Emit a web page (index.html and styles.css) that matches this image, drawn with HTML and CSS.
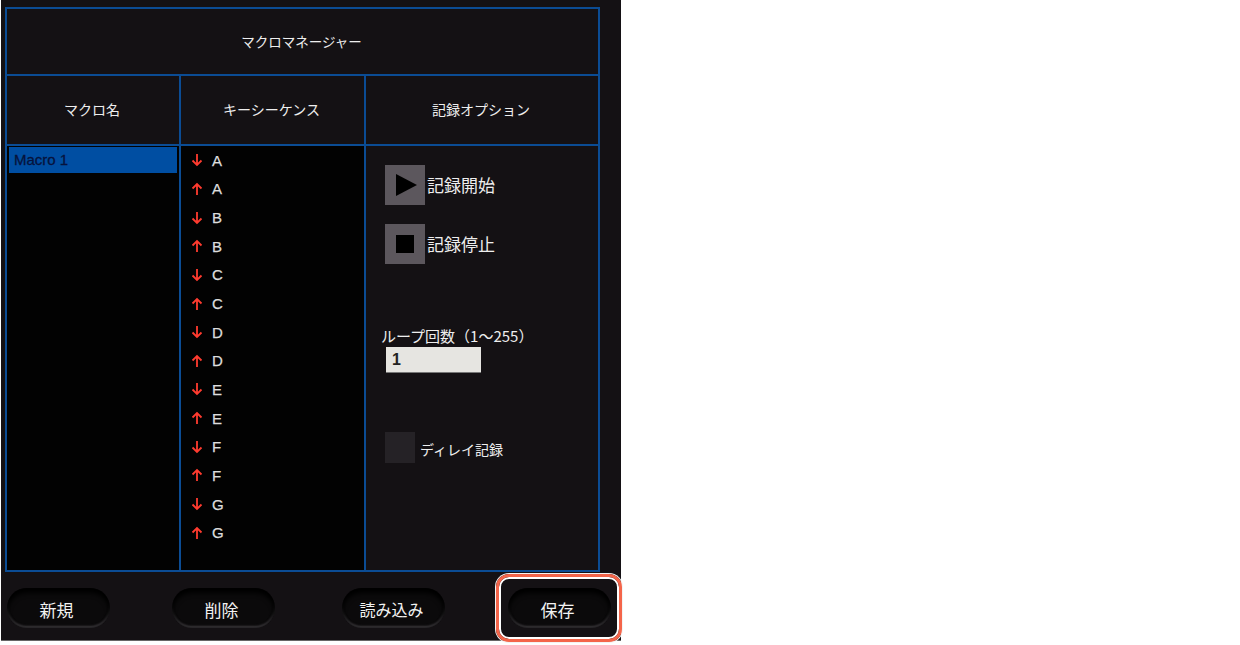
FILE: index.html
```html
<!DOCTYPE html>
<html lang="ja">
<head>
<meta charset="utf-8">
<title>マクロマネージャー</title>
<link rel="stylesheet" href="styles.css">
</head>
<body>
<main class="panel">
  <section class="table">
    <div class="title">マクロマネージャー</div>
    <div class="head">マクロ名</div>
    <div class="head">キーシーケンス</div>
    <div class="head">記録オプション</div>
    <div class="macros"><div class="macro">Macro 1</div></div>
    <ul class="keys">
      <li><svg class="arrow" viewBox="0 0 12 14"><path d="M6 1V12M1.5 7.5L6 12L10.5 7.5"/></svg>A</li>
      <li><svg class="arrow" viewBox="0 0 12 14"><path d="M6 13V2M1.5 6.5L6 2L10.5 6.5"/></svg>A</li>
      <li><svg class="arrow" viewBox="0 0 12 14"><path d="M6 1V12M1.5 7.5L6 12L10.5 7.5"/></svg>B</li>
      <li><svg class="arrow" viewBox="0 0 12 14"><path d="M6 13V2M1.5 6.5L6 2L10.5 6.5"/></svg>B</li>
      <li><svg class="arrow" viewBox="0 0 12 14"><path d="M6 1V12M1.5 7.5L6 12L10.5 7.5"/></svg>C</li>
      <li><svg class="arrow" viewBox="0 0 12 14"><path d="M6 13V2M1.5 6.5L6 2L10.5 6.5"/></svg>C</li>
      <li><svg class="arrow" viewBox="0 0 12 14"><path d="M6 1V12M1.5 7.5L6 12L10.5 7.5"/></svg>D</li>
      <li><svg class="arrow" viewBox="0 0 12 14"><path d="M6 13V2M1.5 6.5L6 2L10.5 6.5"/></svg>D</li>
      <li><svg class="arrow" viewBox="0 0 12 14"><path d="M6 1V12M1.5 7.5L6 12L10.5 7.5"/></svg>E</li>
      <li><svg class="arrow" viewBox="0 0 12 14"><path d="M6 13V2M1.5 6.5L6 2L10.5 6.5"/></svg>E</li>
      <li><svg class="arrow" viewBox="0 0 12 14"><path d="M6 1V12M1.5 7.5L6 12L10.5 7.5"/></svg>F</li>
      <li><svg class="arrow" viewBox="0 0 12 14"><path d="M6 13V2M1.5 6.5L6 2L10.5 6.5"/></svg>F</li>
      <li><svg class="arrow" viewBox="0 0 12 14"><path d="M6 1V12M1.5 7.5L6 12L10.5 7.5"/></svg>G</li>
      <li><svg class="arrow" viewBox="0 0 12 14"><path d="M6 13V2M1.5 6.5L6 2L10.5 6.5"/></svg>G</li>
    </ul>
    <div class="options">
      <div class="rec">
        <span class="icon-btn"><svg class="icon" viewBox="0 0 40 40"><path d="M11 9V31L32 20Z"/></svg></span>
        <span class="rec-text">記録開始</span>
      </div>
      <div class="rec rec-stop">
        <span class="icon-btn"><svg class="icon" viewBox="0 0 40 40"><rect x="11" y="11" width="18" height="18"/></svg></span>
        <span class="rec-text">記録停止</span>
      </div>
      <div class="loop">
        <div class="loop-label">ループ回数（1～255）</div>
        <div class="loop-input">1</div>
      </div>
      <div class="delay">
        <span class="check"></span>
        <span class="delay-text">ディレイ記録</span>
      </div>
    </div>
  </section>
  <footer class="actions">
    <div class="btn">新規</div>
    <div class="btn">削除</div>
    <div class="btn btn-load">読み込み</div>
    <div class="btn btn-save">保存</div>
  </footer>
  <div class="highlight"></div>
</main>
</body>
</html>
```
FILE: styles.css
```css
* { box-sizing: border-box; }
html, body { margin: 0; background: #fff; }
body {
  width: 1240px;
  height: 645px;
  overflow: hidden;
  font-family: "Noto Sans CJK JP", "Liberation Sans", sans-serif;
  color: #eee;
}
.panel {
  position: relative;
  margin-left: 1px;
  width: 620px;
  height: 641px;
  background: #141114;
  padding: 7px 0 0 4px;
  border-bottom: 1px solid #666;
}
.table {
  width: 595px;
  height: 565px;
  display: grid;
  grid-template-columns: 174px 185px 1fr;
  grid-template-rows: 67px 70px 1fr;
  border: 2px solid #0b4c94;
}
.title {
  grid-column: 1 / 4;
  display: flex;
  align-items: center;
  justify-content: center;
  font-size: 13.5px;
  padding: 0 2px 1px 0;
  border-bottom: 2px solid #0b4c94;
}
.head {
  display: flex;
  align-items: center;
  justify-content: center;
  font-size: 14px;
  padding: 0 2px 3px 0;
  border-bottom: 2px solid #0b4c94;
  border-right: 2px solid #0b4c94;
}
.head:nth-child(4) { border-right: 0; }
.macros {
  background: #020202;
  border-right: 2px solid #0b4c94;
  padding: 1px 2px 0 2px;
}
.macro {
  height: 26px;
  background: #004ea2;
  color: #06133d;
  font: 400 15px/25px "Liberation Sans", sans-serif;
  -webkit-text-stroke: 0.3px #06133d;
  padding-left: 5px;
}
.keys {
  list-style: none;
  margin: 0;
  background: #020202;
  border-right: 2px solid #0b4c94;
  padding: 0 0 0 10px;
  display: flex;
  flex-direction: column;
  gap: 0;
}
.keys li {
  height: 28.65px;
  display: flex;
  align-items: center;
  gap: 9px;
  color: #ddd;
  font: 15px "Liberation Sans", sans-serif;
  -webkit-text-stroke: 0.25px #ddd;
}
.arrow {
  width: 12px;
  height: 14px;
  fill: none;
  stroke: #ff3b2f;
  stroke-width: 1.8;
}
.options { display: flex; flex-direction: column; padding: 19px 0 0 15px; font-size: 17px; }
.rec { display: flex; align-items: center; gap: 2px; height: 40px; padding-left: 4px; }
.rec-stop { margin-top: 19px; }
.rec-text { padding-bottom: 2px; }
.icon-btn { width: 40px; height: 40px; background: #5c575d; display: block; }
.icon { display: block; width: 40px; height: 40px; fill: #000; }
.loop { margin-top: 61px; }
.loop-label { font-size: 15px; line-height: 22px; white-space: nowrap; }
.loop-input {
  width: 95px;
  height: 26px;
  margin: 0 0 0 5px;
  background: #e6e5e1;
  border-bottom: 1px solid #777;
  color: #222;
  font: 700 16px/25px "Liberation Sans", sans-serif;
  padding-left: 6px;
}
.delay { display: flex; align-items: center; gap: 5px; margin-top: 59px; padding-left: 4px; font-size: 14px; }
.delay-text { padding-top: 3px; }
.check { width: 30px; height: 31px; background: #252226; display: block; }
.actions {
  display: flex;
  gap: 62px;
  margin-top: 16px;
  padding-left: 2px;
}
.btn {
  width: 103px;
  height: 40px;
  border-radius: 20px;
  background: #0b0a0b;
  box-shadow: inset 0 5px 5px #000, inset 0 0 3px #000, inset 0 -2px 2px #444145;
  display: flex;
  align-items: center;
  justify-content: center;
  font-size: 17px;
  padding: 2px 4px 0 0;
  color: #f2f2f2;
}
.btn-load { margin-left: 5px; font-size: 16px; }
.btn-save { margin-left: 1px; }
.highlight {
  position: absolute;
  left: 495px;
  top: 574px;
  width: 126px;
  height: 68px;
  border: 3px solid #f4654a;
  border-radius: 13px;
  box-shadow: 0 0 0 1px #f3f3f3, inset 0 0 0 2px #fff;
}
```
